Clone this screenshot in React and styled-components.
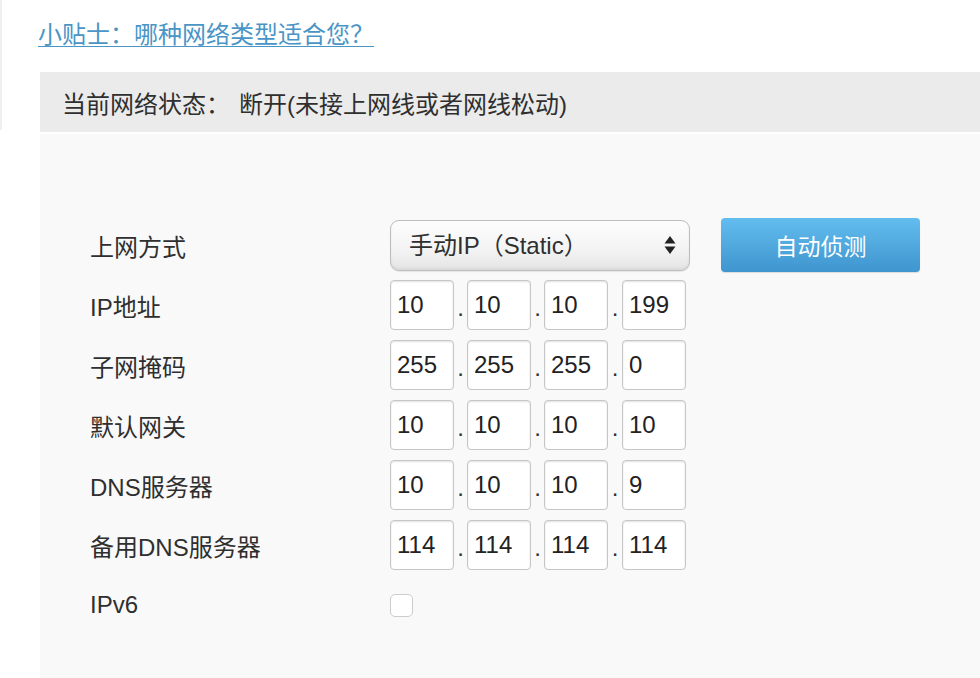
import React from "react";
import styled, { createGlobalStyle } from "styled-components";

const GlobalStyle = createGlobalStyle`
  html, body {
    margin: 0;
    padding: 0;
    background: #ffffff;
    overflow: hidden;
  }
  body {
    font-family: "Liberation Sans", "Noto Sans CJK SC", sans-serif;
    color: #333333;
  }
`;

const Page = styled.div`
  display: flex;
  align-items: flex-start;
  width: 980px;
  height: 678px;
`;

const Edge = styled.div`
  width: 2px;
  height: 130px;
  background: #f0f0f0;
  flex-shrink: 0;
`;

const Main = styled.div`
  flex: 1;
  margin-left: 36px;
  padding-top: 20px;
  display: flex;
  flex-direction: column;
`;

const TipLink = styled.a`
  align-self: flex-start;
  font-size: 24px;
  line-height: 30px;
  color: #4a95c6;
  text-decoration: underline;
  text-underline-offset: 3px;
  text-decoration-thickness: 1px;
  cursor: pointer;
`;

const StatusBar = styled.div`
  margin: 22px 0 0 2px;
  height: 60px;
  padding-left: 22px;
  background: #ebebeb;
  display: flex;
  align-items: center;
  font-size: 24px;
  color: #2f2f2f;

  .value {
    margin-left: 9px;
  }
`;

const Panel = styled.div`
  margin: 2px 0 0 2px;
  height: 544px;
  box-sizing: border-box;
  background: #f9f9f9;
  padding: 86px 0 0 50px;
  display: flex;
  flex-direction: column;
  gap: 10px;
`;

const Row = styled.div`
  display: flex;
  align-items: center;
  height: 50px;
  flex-shrink: 0;
`;

const Label = styled.div`
  width: 300px;
  flex-shrink: 0;
  font-size: 24px;
  color: #2f2f2f;
`;

const SelectWrap = styled.div`
  position: relative;
  width: 300px;
  height: 51px;
`;

const Select = styled.select`
  appearance: none;
  -webkit-appearance: none;
  width: 100%;
  height: 100%;
  box-sizing: border-box;
  padding: 0 40px 0 18px;
  border: 1px solid #bdbdbd;
  border-radius: 9px;
  background: linear-gradient(#fdfdfd, #f3f3f3 60%, #e4e4e4);
  box-shadow: inset 0 -2px 3px rgba(0, 0, 0, 0.05), 0 1px 1px rgba(0, 0, 0, 0.08);
  font-family: inherit;
  font-size: 24px;
  color: #2f2f2f;
  outline: none;
`;

const Arrows = styled.svg`
  position: absolute;
  right: 14px;
  top: 50%;
  transform: translateY(-50%);
  pointer-events: none;
`;

const DetectButton = styled.button`
  margin-left: 31px;
  width: 199px;
  height: 54px;
  flex-shrink: 0;
  border: none;
  border-radius: 4px;
  background: linear-gradient(#63bdef, #3f95ce);
  box-shadow: 0 1px 1px rgba(0, 0, 0, 0.12);
  color: #ffffff;
  font-family: inherit;
  font-size: 23px;
  cursor: pointer;
`;

const IpGroup = styled.div`
  display: flex;
  align-items: flex-end;
`;

const Octet = styled.input`
  width: 64px;
  height: 50px;
  box-sizing: border-box;
  padding: 0 0 0 6px;
  border: 1px solid #c6c6c6;
  border-radius: 4px;
  background: #ffffff;
  box-shadow: inset 0 1px 2px rgba(0, 0, 0, 0.12);
  font-family: inherit;
  font-size: 24px;
  color: #222222;
  outline: none;
`;

const Dot = styled.span`
  width: ${(p) => p.$w}px;
  text-align: center;
  font-size: 24px;
  line-height: 1;
  padding-bottom: 10px;
  color: #333333;
`;

const Check = styled.input`
  appearance: none;
  -webkit-appearance: none;
  margin: 0;
  width: 23px;
  height: 23px;
  border: 1px solid #cccccc;
  border-radius: 5px;
  background: #ffffff;
`;

const addresses = [
  { label: "IP地址", value: ["10", "10", "10", "199"] },
  { label: "子网掩码", value: ["255", "255", "255", "0"] },
  { label: "默认网关", value: ["10", "10", "10", "10"] },
  { label: "DNS服务器", value: ["10", "10", "10", "9"] },
  { label: "备用DNS服务器", value: ["114", "114", "114", "114"] },
];

function IpInput({ value }) {
  return (
    <IpGroup>
      {value.map((v, i) => (
        <React.Fragment key={i}>
          {i > 0 && <Dot $w={i === 3 ? 14 : 13}>.</Dot>}
          <Octet defaultValue={v} />
        </React.Fragment>
      ))}
    </IpGroup>
  );
}

export default function App() {
  return (
    <>
      <GlobalStyle />
      <Page>
        <Edge />
        <Main>
          <TipLink>小贴士：哪种网络类型适合您？</TipLink>
          <StatusBar>
            <span>当前网络状态：</span>
            <span className="value">断开(未接上网线或者网线松动)</span>
          </StatusBar>
          <Panel>
            <Row>
              <Label>上网方式</Label>
              <SelectWrap>
                <Select defaultValue="static">
                  <option value="static">手动IP（Static）</option>
                  <option value="dhcp">自动获取（DHCP）</option>
                  <option value="pppoe">宽带拨号（PPPoE）</option>
                </Select>
                <Arrows width="12" height="20" viewBox="0 0 12 20">
                  <path d="M6 1 L11.5 8.5 H0.5 Z" fill="#222" />
                  <path d="M6 19 L11.5 11.5 H0.5 Z" fill="#222" />
                </Arrows>
              </SelectWrap>
              <DetectButton>自动侦测</DetectButton>
            </Row>
            {addresses.map((a) => (
              <Row key={a.label}>
                <Label>{a.label}</Label>
                <IpInput value={a.value} />
              </Row>
            ))}
            <Row>
              <Label>IPv6</Label>
              <Check type="checkbox" />
            </Row>
          </Panel>
        </Main>
      </Page>
    </>
  );
}
